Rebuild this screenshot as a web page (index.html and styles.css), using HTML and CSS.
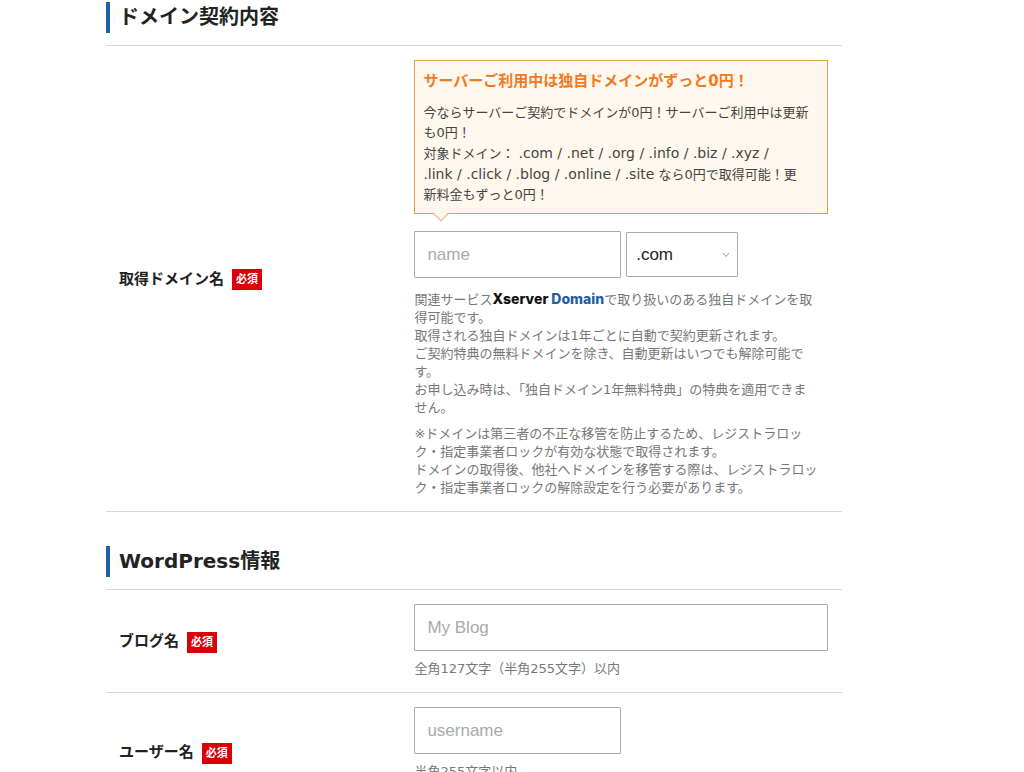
FILE: index.html
```
<!DOCTYPE html>
<html lang="ja">
<head>
<meta charset="utf-8">
<meta name="viewport" content="width=device-width, initial-scale=1">
<title>ドメイン契約内容</title>
<link rel="stylesheet" href="styles.css">
</head>
<body>
<form class="form">
  <section class="section">
    <h2 class="section-title">ドメイン契約内容</h2>
    <div class="rows">
      <div class="row">
        <div class="row-head"><label class="row-label" for="domain">取得ドメイン名</label><span class="badge">必須</span></div>
        <div class="row-body">
          <div class="notice">
            <p class="notice-title">サーバーご利用中は独自ドメインがずっと0円！</p>
            <p class="notice-text">今ならサーバーご契約でドメインが0円！サーバーご利用中は更新<br>も0円！<br>対象ドメイン： <span class="tlds">.com / .net / .org / .info / .biz / .xyz /</span><br><span class="tlds">.link / .click / .blog / .online / .site</span> なら0円で取得可能！更<br>新料金もずっと0円！</p>
          </div>
          <div class="domain-fields">
            <input class="text-input" id="domain" type="text" placeholder="name">
            <span class="select-wrap">
              <select class="select" aria-label="ドメイン種別"><option>.com</option><option>.net</option><option>.org</option></select>
              <svg class="select-arrow" viewBox="0 0 8 6" aria-hidden="true"><path d="M1 1l3 3.5L7 1" fill="none" stroke="#999" stroke-width="1"/></svg>
            </span>
          </div>
          <p class="help help-domain">関連サービス<span class="brand">Xserver <span class="brand-blue">Domain</span></span>で取り扱いのある独自ドメインを取<br>得可能です。<br>取得される独自ドメインは1年ごとに自動で契約更新されます。<br>ご契約特典の無料ドメインを除き、自動更新はいつでも解除可能で<br>す。<br>お申し込み時は、「独自ドメイン1年無料特典」の特典を適用できま<br>せん。</p>
          <p class="help">※ドメインは第三者の不正な移管を防止するため、レジストラロッ<br>ク・指定事業者ロックが有効な状態で取得されます。<br>ドメインの取得後、他社へドメインを移管する際は、レジストラロッ<br>ク・指定事業者ロックの解除設定を行う必要があります。</p>
        </div>
      </div>
    </div>
  </section>
  <section class="section">
    <h2 class="section-title">WordPress情報</h2>
    <div class="rows">
      <div class="row">
        <div class="row-head"><label class="row-label" for="blog">ブログ名</label><span class="badge">必須</span></div>
        <div class="row-body">
          <input class="text-input text-input-wide" id="blog" type="text" placeholder="My Blog">
          <p class="help">全角127文字（半角255文字）以内</p>
        </div>
      </div>
      <div class="row">
        <div class="row-head"><label class="row-label" for="user">ユーザー名</label><span class="badge">必須</span></div>
        <div class="row-body row-body-tall">
          <input class="text-input" id="user" type="text" placeholder="username">
          <p class="help">半角255文字以内</p>
        </div>
      </div>
    </div>
  </section>
</form>
</body>
</html>
```
FILE: styles.css
```
* {
  box-sizing: border-box;
}

body {
  margin: 0;
  background: #fff;
  color: #222;
  font-family: "DejaVu Sans", "Noto Sans CJK JP", sans-serif;
}

p,
h2 {
  margin: 0;
}

.form {
  max-width: 842px;
  padding: 2px 0 0 106px;
}

.section {
  margin-bottom: 34px;
}

.section-title {
  border-left: 4px solid #1f5fa5;
  padding-left: 9px;
  font-size: 20px;
  line-height: 31px;
}

.rows {
  margin-top: 12px;
  border-top: 1px solid #d8d8d8;
}

.row {
  display: grid;
  grid-template-columns: 40% 60%;
  align-items: center;
  border-bottom: 1px solid #d8d8d8;
}

.row-head {
  display: flex;
  align-items: center;
  gap: 8px;
  padding-left: 13px;
}

.row-label {
  font-size: 15px;
  font-weight: bold;
  line-height: 22px;
}

.badge {
  margin-top: 2px;
  padding: 0 4px;
  background: #d90008;
  color: #fff;
  font-size: 11px;
  font-weight: bold;
  line-height: 21px;
}

.row-body {
  padding: 14px;
}

.row-body-tall {
  padding-bottom: 30px;
}

.notice {
  position: relative;
  margin-bottom: 17px;
  padding: 8px;
  border: 1px solid #d9a04e;
  background: #fff8ee;
}

.notice::after {
  content: "";
  position: absolute;
  left: 20px;
  bottom: -6px;
  width: 11px;
  height: 11px;
  border: solid #e0b87c;
  border-width: 0 1px 1px 0;
  background: linear-gradient(135deg, transparent 50%, #fff8ee 50%);
  transform: rotate(45deg);
}

.notice-title {
  margin-bottom: 10px;
  color: #f17a21;
  font-size: 15px;
  font-weight: bold;
  line-height: 24px;
}

.notice-text {
  color: #444;
  font-size: 13px;
  line-height: 20px;
}

.tlds {
  font-size: 14px;
}

.domain-fields {
  display: flex;
  align-items: center;
  gap: 5px;
}

.text-input {
  display: block;
  width: 50%;
  height: 47px;
  padding: 0 12px;
  border: 1px solid #aaa;
  border-radius: 1px;
  background: #fff;
  color: #222;
  font-family: "Liberation Sans", "Noto Sans CJK JP", sans-serif;
  font-size: 17px;
}

.text-input::placeholder {
  color: #aaa;
}

.text-input-wide {
  width: 100%;
}

.select-wrap {
  position: relative;
}

.select {
  appearance: none;
  display: block;
  width: 112px;
  height: 45px;
  padding: 0 9px;
  border: 1px solid #aaa;
  border-radius: 1px;
  background: #fff;
  color: #222;
  font-family: "Liberation Sans", "Noto Sans CJK JP", sans-serif;
  font-size: 17px;
}

.select-arrow {
  position: absolute;
  right: 8px;
  top: 20px;
  width: 8px;
  height: 6px;
  pointer-events: none;
}

.help {
  margin-top: 9px;
  color: #777;
  font-size: 13px;
  line-height: 18px;
}

.help + .help {
  margin-top: 8px;
}

.help-domain {
  margin-top: 12px;
}

.brand {
  color: #111;
  font-family: Inter, sans-serif;
  font-size: 14px;
  font-weight: 800;
}

.brand-blue {
  color: #1f5f9f;
}
```
